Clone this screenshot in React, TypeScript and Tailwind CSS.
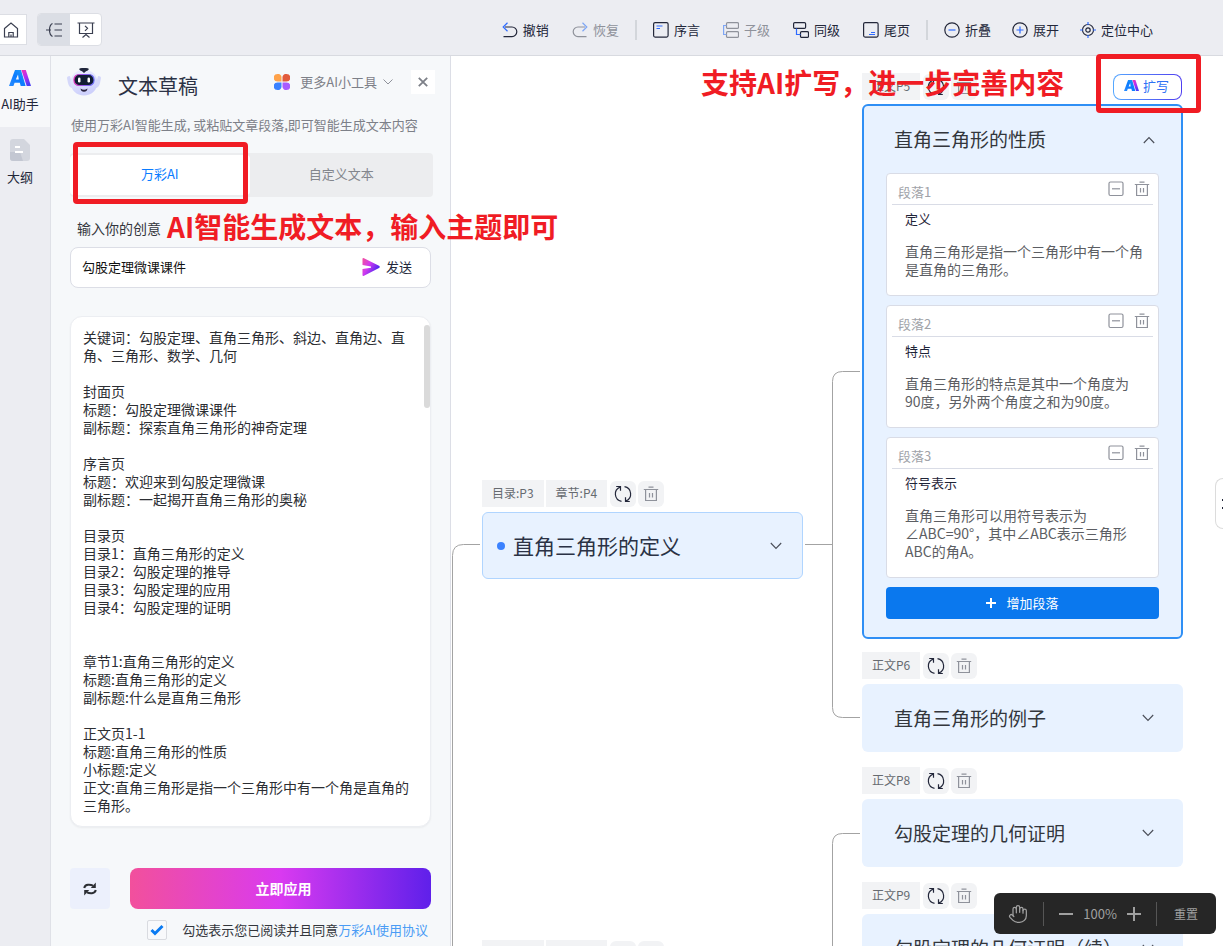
import { useState, type ReactNode } from 'react';
import { Hand } from 'lucide-react';

const DRAFT = `关键词：勾股定理、直角三角形、斜边、直角边、直角、三角形、数学、几何

封面页
标题：勾股定理微课课件
副标题：探索直角三角形的神奇定理

序言页
标题：欢迎来到勾股定理微课
副标题：一起揭开直角三角形的奥秘

目录页
目录1：直角三角形的定义
目录2：勾股定理的推导
目录3：勾股定理的应用
目录4：勾股定理的证明


章节1:直角三角形的定义
标题:直角三角形的定义
副标题:什么是直角三角形

正文页1-1
标题:直角三角形的性质
小标题:定义
正文:直角三角形是指一个三角形中有一个角是直角的三角形。`;

const PARAGRAPHS = [
  { label: '段落1', title: '定义', lines: ['直角三角形是指一个三角形中有一个角', '是直角的三角形。'] },
  { label: '段落2', title: '特点', lines: ['直角三角形的特点是其中一个角度为', '90度，另外两个角度之和为90度。'] },
  {
    label: '段落3',
    title: '符号表示',
    lines: ['直角三角形可以用符号表示为', '∠ABC=90°，其中∠ABC表示三角形', 'ABC的角A。'],
  },
];

const COLLAPSED = [
  { page: '正文P6', title: '直角三角形的例子' },
  { page: '正文P8', title: '勾股定理的几何证明' },
  { page: '正文P9', title: '勾股定理的几何证明（续）' },
];

function Icon({ size = 16, children }: { size?: number; children: ReactNode }) {
  return (
    <svg
      width={size}
      height={size}
      viewBox={`0 0 ${size} ${size}`}
      fill="none"
      stroke="currentColor"
      strokeWidth="1.2"
      className="shrink-0"
      aria-hidden="true"
    >
      {children}
    </svg>
  );
}

function AiLogo({ width, id }: { width: number; id: string }) {
  return (
    <svg width={width} viewBox="0 0 22 16" aria-hidden="true">
      <defs>
        <linearGradient id={`${id}-a`} x1="0" y1="1" x2="1" y2="0">
          <stop offset="0" stopColor="#2a8cff" />
          <stop offset="0.5" stopColor="#0a7bff" />
          <stop offset="1" stopColor="#1fa2f5" />
        </linearGradient>
        <linearGradient id={`${id}-b`} x1="0" y1="0" x2="0.6" y2="1">
          <stop offset="0" stopColor="#f531b5" />
          <stop offset="0.5" stopColor="#b62ff0" />
          <stop offset="1" stopColor="#4a3df5" />
        </linearGradient>
      </defs>
      <path
        fillRule="evenodd"
        d="M6 0h6l4.6 16h-4.9l-.9-3.2H5.6L4.4 16H0zM9 4.5 6.8 9.6h3z"
        fill={`url(#${id}-a)`}
      />
      <path d="M12.4 0h4.4L22 16h-4.3z" fill={`url(#${id}-b)`} />
    </svg>
  );
}

function Robot() {
  return (
    <svg width="36" height="30" viewBox="0 0 36 30" aria-hidden="true">
      <defs>
        <linearGradient id="head" x1="0" y1="0" x2="0.3" y2="1">
          <stop offset="0" stopColor="#eef0ff" />
          <stop offset="1" stopColor="#cdd0fb" />
        </linearGradient>
        <linearGradient id="visor" x1="0" y1="0" x2="1" y2="0">
          <stop offset="0" stopColor="#e235b8" />
          <stop offset="0.5" stopColor="#8c5cf0" />
          <stop offset="1" stopColor="#6b6ef5" />
        </linearGradient>
      </defs>
      <path d="M1 11q0-2 3-2l3 12q-4 0-5-5zM35 11q0-2-3-2l-3 12q4 0 5-5z" fill="#d5d8fa" />
      <ellipse cx="18" cy="15.5" rx="13.5" ry="13" fill="url(#head)" />
      <path d="M13 2q1-1 3-1h4q2 0 3 1-1 1.800-3 2.200L18 6l-2-1.800Q14 3.800 13 2z" fill="#20263c" />
      <rect x="8" y="7.500" width="20" height="11" rx="5" fill="#101c33" stroke="url(#visor)" strokeWidth="1.200" />
      <rect x="12" y="10.500" width="2.500" height="5" rx="1.200" fill="#fff" />
      <rect x="21.500" y="10.500" width="2.500" height="5" rx="1.200" fill="#fff" />
      <path d="M14.500 21.500q3.500 2.500 7 0-.5 3.200-3.500 3.200t-3.500-3.200z" fill="#2b2440" />
    </svg>
  );
}

function ToolItem({ label, muted, children }: { label: string; muted?: boolean; children: ReactNode }) {
  return (
    <button
      type="button"
      disabled={muted}
      className={`flex items-center gap-[5px] whitespace-nowrap ${muted ? 'text-[#8f929b]' : 'text-[#23273a]'}`}
    >
      <Icon>{children}</Icon>
      {label}
    </button>
  );
}

function Divider() {
  return <span className="mx-4 h-5 w-0.5 bg-[#d3d6db]" />;
}

function TopBar() {
  return (
    <header className="flex h-14 shrink-0 items-center border-b border-[#d8dae0] bg-[#ecedf2] pt-1">
      <button
        type="button"
        aria-label="主页"
        className="flex h-[31px] w-[27px] items-center border border-l-0 border-[#dcdee4] bg-white pl-[3px] text-[#3a3f50]"
      >
        <Icon>
          <path d="M1.500 6.500 8 1l6.500 5.500V15h-13zM5.800 15v-4.500h4.400V15M8 12.500V15" />
        </Icon>
      </button>
      <div className="ml-2.5 flex h-[33px] overflow-hidden rounded border border-[#dcdee4] bg-white text-[#3a3f50]">
        <button type="button" aria-label="导图视图" className="flex w-8 items-center justify-center bg-[#dbdee5]">
          <Icon>
            <path d="M0 8h5M6.500 1.500Q3.500 3 3.500 8T6.500 14.500M8.500 2h7.500M8.500 8h7.500M8.500 14h7.500" />
          </Icon>
        </button>
        <button type="button" aria-label="演示视图" className="flex w-[31px] items-center justify-center">
          <Icon size={18}>
            <path d="M.5 2h17M2.500 2v10.500h13V2M8 4.800l2.500 2.500L8 9.800M9 12.500v1.500M5.500 16.500 9 13.500l3.500 3" />
          </Icon>
        </button>
      </div>

      <nav className="mr-[70px] ml-auto flex items-center text-[13px]">
        <div className="flex gap-[23px]">
          <ToolItem label="撤销">
            <path d="M3 5h7a4.800 4.800 0 0 1 0 9.600H1.500" />
            <path d="M5.500.8 1.200 5l4.300 4.200" stroke="#2f6bff" />
          </ToolItem>
          <ToolItem label="恢复" muted>
            <path d="M13 5H6a4.800 4.800 0 0 0 0 9.600h8.500" />
            <path d="M10.500.8 14.800 5l-4.300 4.200" stroke="#7ea6f5" />
          </ToolItem>
        </div>
        <Divider />
        <div className="flex gap-[23px]">
          <ToolItem label="序言">
            <rect x=".6" y=".6" width="14.500" height="14.500" rx="1.500" />
            <path d="M3.500 4h6M3.500 6.500h3.500" stroke="#2f6bff" />
          </ToolItem>
          <ToolItem label="子级" muted>
            <rect x="3.500" y=".6" width="12" height="5.800" rx="1.200" />
            <rect x="3.500" y="9.600" width="12" height="5.800" rx="1.200" />
            <path d="M3.500 3.500H.6v9h2.900" stroke="#7ea6f5" />
          </ToolItem>
          <ToolItem label="同级">
            <rect x=".6" y=".6" width="12" height="5.800" rx="1.200" />
            <rect x="7.500" y="9.600" width="8" height="5.800" rx="1.200" />
            <path d="M3.500 6.500v6h4" stroke="#2f6bff" />
          </ToolItem>
          <ToolItem label="尾页">
            <rect x=".6" y=".6" width="14.500" height="14.500" rx="1.500" />
            <path d="M8 10.500h4M6 12.500h6" stroke="#2f6bff" />
          </ToolItem>
        </div>
        <Divider />
        <div className="flex gap-[21px]">
          <ToolItem label="折叠">
            <circle cx="8" cy="8" r="7.200" />
            <path d="M4.500 8h7" stroke="#2f6bff" />
          </ToolItem>
          <ToolItem label="展开">
            <circle cx="8" cy="8" r="7.200" />
            <path d="M4.500 8h7M8 4.500v7" stroke="#2f6bff" />
          </ToolItem>
          <ToolItem label="定位中心">
            <circle cx="8" cy="8" r="5.500" />
            <circle cx="8" cy="8" r="2.200" />
            <path d="M8 0v3M8 13v3M0 8h3M13 8h3" stroke="#2f6bff" />
          </ToolItem>
        </div>
      </nav>
    </header>
  );
}

function SideRail() {
  return (
    <aside className="flex w-[51px] shrink-0 flex-col border-r border-[#dfe1e7] bg-[#ecedf2] text-[13px] text-[#23273a]">
      <button type="button" className="flex h-[71px] flex-col items-center bg-[#f7f8fa] pt-3.5 pr-2.5 whitespace-nowrap">
        <AiLogo width={22} id="rail" />
        <span className="mt-2 leading-5">AI助手</span>
      </button>
      <button type="button" className="flex flex-col items-center pt-3 pr-2.5">
        <svg width="20" height="22" viewBox="0 0 20 22" aria-hidden="true">
          <path d="M3 0h11l6 6v13q0 3-3 3H3q-3 0-3-3V3q0-3 3-3z" fill="#d3d6de" />
          <path d="M0 13h10l3 9H3q-3 0-3-3z" fill="#c3c7d2" />
          <path d="M5 8h5M5 13h8" stroke="#fff" strokeWidth="2" />
        </svg>
        <span className="mt-1.5 leading-5">大纲</span>
      </button>
    </aside>
  );
}

function DraftPanel() {
  const [tab, setTab] = useState('ai');
  const [agreed, setAgreed] = useState(true);

  return (
    <section className="relative z-10 flex w-[400px] shrink-0 flex-col border-r border-[#dcdee6] bg-[#f6f8fa] px-[19px] pb-[5px]">
      <div className="flex h-14 items-center pb-1">
        <div className="-ml-1">
          <Robot />
        </div>
        <h1 className="ml-4 pt-2 text-[20px] text-[#2b3245]">文本草稿</h1>
        <button type="button" className="ml-auto flex items-center text-[13px] text-[#7d8088]">
          <svg width="16" height="16" viewBox="0 0 16 16" className="mr-2.5" aria-hidden="true">
            <path d="M3.500 0A3.500 3.500 0 0 1 7.500 4v3.500H3.500a3.500 3.500 0 0 1 0-7.500z" fill="#ffa24a" />
            <path d="M12.500 0A3.500 3.500 0 0 0 8.500 4v3.500h4a3.500 3.500 0 0 0 0-7.500z" fill="#e25b3c" />
            <path d="M3.500 16A3.500 3.500 0 0 0 7.500 12V8.500H3.500a3.500 3.500 0 0 0 0 7.500z" fill="#3b82ff" />
            <path d="M12.500 16A3.500 3.500 0 0 1 8.500 12V8.500h4a3.500 3.500 0 0 1 0 7.500z" fill="#a85bff" />
          </svg>
          更多AI小工具
          <svg width="10" height="6" viewBox="0 0 10 6" className="ml-1.5" fill="none" stroke="#8f929b">
            <path d="M.5.5 5 5 9.500.5" />
          </svg>
        </button>
        <button
          type="button"
          aria-label="关闭"
          className="mr-[-4px] ml-[18px] flex size-6 items-center justify-center bg-white text-[#7d8088]"
        >
          <svg width="10" height="10" viewBox="0 0 10 10" stroke="currentColor" strokeWidth="1.800">
            <path d="m.8.8 8.400 8.400M9.200.8.8 9.200" />
          </svg>
        </button>
      </div>
      <p className="pl-px text-[13px] leading-[26px] whitespace-nowrap text-[#7d8088]">
        使用万彩AI智能生成, 或粘贴文章段落,即可智能生成文本内容
      </p>

      <div className="relative mt-[15px] mr-[-2px] flex h-11 shrink-0 rounded bg-[#ecedef] text-[13px]">
        <button
          type="button"
          onClick={() => setTab('ai')}
          className={`my-0.5 mr-0.5 flex-1 rounded-sm pb-0.5 ${tab === 'ai' ? 'bg-white text-[#0a7bff]' : 'text-[#83868d]'}`}
        >
          万彩AI
        </button>
        <button
          type="button"
          onClick={() => setTab('custom')}
          className={`my-0.5 mr-0.5 flex-1 rounded-sm pb-0.5 ${tab === 'custom' ? 'bg-white text-[#0a7bff]' : 'text-[#83868d]'}`}
        >
          自定义文本
        </button>
        <span className="pointer-events-none absolute -top-[11px] left-[3px] h-[62px] w-[175px] rounded-sm border-5 border-[#f01c24]" />
      </div>

      <div className="relative mt-[19px] pl-[7px] text-[14px] leading-6 text-[#33363c]">
        <label htmlFor="idea">输入你的创意</label>
        <strong className="absolute -top-2 left-[97px] text-[28px] leading-9 whitespace-nowrap text-[#f01c24]">
          AI智能生成文本，输入主题即可
        </strong>
      </div>
      <div className="mt-[7px] flex h-[41px] shrink-0 items-center rounded-lg border border-[#dcdee6] bg-white px-[11px] pb-0.5">
        <input
          id="idea"
          defaultValue="勾股定理微课课件"
          className="min-w-0 flex-1 text-[13px] text-[#111] outline-none"
        />
        <button type="button" className="mr-[7px] flex items-center gap-1.5 text-[13px] text-[#23273a]">
          <svg width="18" height="18" viewBox="0 0 18 18" aria-hidden="true">
            <defs>
              <linearGradient id="send" x1="0" y1="0" x2="1" y2="0.6">
                <stop offset="0" stopColor="#f5509a" />
                <stop offset="0.45" stopColor="#cf3af0" />
                <stop offset="1" stopColor="#3f22f0" />
              </linearGradient>
            </defs>
            <path d="M.5 1Q.5-.5 2 .3l15 7.500q1.500 1.200 0 2.200L2 17.700Q.5 18.300.5 17v-6L9 9.800V8.400L.5 7z" fill="url(#send)" />
          </svg>
          发送
        </button>
      </div>

      <div className="relative mt-7 flex min-h-0 flex-1 rounded-xl border border-[#eceef2] bg-white shadow-xs">
        <textarea
          aria-label="文本内容"
          defaultValue={DRAFT}
          className="w-full resize-none overflow-hidden rounded-xl py-[11px] pr-[17px] pl-3 text-[14px] leading-[18px] text-[#2c2e33] outline-none"
        />
        <span className="absolute top-2 right-0 h-[83px] w-1.5 rounded-full bg-[#dadada]" />
      </div>

      <div className="mt-[41px] flex h-[41px] shrink-0 gap-5">
        <button type="button" aria-label="重新生成" className="flex w-10 items-center justify-center rounded bg-[#ecf0fc]">
          <svg width="14" height="14" viewBox="0 0 14 14" fill="none" stroke="#2c2e33" strokeWidth="2">
            <path d="M1.200 6Q2 3 5 2.800q3-.2 5 .8M12.800 8Q12 11 9 11.200q-3 .2-5-.8" />
            <path d="M12.800.5v5.500H7.800zM1.200 13.500V8h5z" fill="#2c2e33" stroke="none" />
          </svg>
        </button>
        <button
          type="button"
          className="flex-1 rounded-lg bg-[linear-gradient(90deg,#f2509c,#d93af0_50%,#5f20ea)] pl-1.5 text-[14px] font-bold text-white"
        >
          立即应用
        </button>
      </div>
      <div className="mt-2.5 flex h-[22px] items-center justify-end pr-[3px] text-[13px] whitespace-nowrap text-[#33363c]">
        <span className="relative mr-[15px] flex size-5">
          <input
            id="agree"
            type="checkbox"
            checked={agreed}
            onChange={(e) => setAgreed(e.target.checked)}
            className="size-5 appearance-none rounded-xs border border-[#d9dbe0] bg-[#f8f9fb]"
          />
          {agreed && (
            <svg
              width="14"
              height="12"
              viewBox="0 0 14 12"
              fill="none"
              stroke="#0a7bf2"
              strokeWidth="3"
              className="pointer-events-none absolute top-1 left-[3px]"
            >
              <path d="m1.500 6 3.500 3.500L12.500 2" />
            </svg>
          )}
        </span>
        <label htmlFor="agree">勾选表示您已阅读并且同意</label>
        <a href="#agreement" className="text-[#4a9cf5]">
          万彩AI使用协议
        </a>
      </div>
    </section>
  );
}

function TrashIcon() {
  return (
    <Icon>
      <path d="M5.500 1.200h5M.8 3.500h14.400M2.600 3.500v11h10.800v-11M6.500 7v4.500M9.500 7v4.500" />
    </Icon>
  );
}

function NodeTools({ pages, children }: { pages: string[]; children?: ReactNode }) {
  return (
    <div className="flex h-[27px] items-center gap-0.5 text-[12px] text-[#666a70]">
      {pages.map((page) => (
        <span key={page} className="flex h-full items-center bg-[#f2f3f5] px-2.5 pb-0.5">
          {page}
        </span>
      ))}
      <button
        type="button"
        aria-label="重新生成"
        className="ml-px flex size-[26px] items-center justify-center rounded-md bg-[#f2f3f5] text-[#23273a]"
      >
        <Icon size={18}>
          <path d="M7.500 16.400A7.500 7.500 0 0 1 6 2.100M10.500 1.600A7.500 7.500 0 0 1 12 15.900M2.200 1.500h4.300v4.300M15.800 16.500h-4.300v-4.300" />
        </Icon>
      </button>
      <button
        type="button"
        aria-label="删除"
        className="flex size-[26px] items-center justify-center rounded-md bg-[#f2f3f5] text-[#8f929b]"
      >
        <TrashIcon />
      </button>
      {children}
    </div>
  );
}

function Chevron({ up }: { up?: boolean }) {
  return (
    <svg
      width="12"
      height="8"
      viewBox="0 0 12 8"
      fill="none"
      stroke="#4a4e58"
      strokeWidth="1.100"
      className={up ? 'rotate-180' : ''}
    >
      <path d="M.8 1 6 6.500 11.200 1" />
    </svg>
  );
}

function Paragraph({ label, title, lines }: { label: string; title: string; lines: string[] }) {
  return (
    <article className="rounded border border-[#d9dce6] bg-white px-[5px] pb-[17px]">
      <div className="flex h-[31px] items-center gap-2.5 border-b border-[#d9dce6] pr-[3px] pl-1.5 text-[#8f929b]">
        <span className="mr-auto pt-1.5 text-[13px] text-[#a0a2a8]">{label}</span>
        <button type="button" aria-label="收起段落">
          <Icon>
            <rect x="1" y="1" width="14" height="13.500" rx="1.500" />
            <path d="M4 7.800h8" />
          </Icon>
        </button>
        <button type="button" aria-label="删除段落">
          <TrashIcon />
        </button>
      </div>
      <h3 className="mt-[5px] pl-[13px] text-[13px] leading-[18px] text-[#1f2438]">{title}</h3>
      <p className="mt-3.5 pl-[13px] text-[14px] leading-[18px] whitespace-nowrap text-[#5c5e63]">
        {lines.map((line) => (
          <span key={line} className="block">
            {line}
          </span>
        ))}
      </p>
    </article>
  );
}

function ChapterNode() {
  return (
    <div className="absolute top-[424px] left-[31px] w-[321px]">
      <NodeTools pages={['目录:P3', '章节:P4']} />
      <div className="mt-[5px] flex h-[67px] items-center rounded-md border border-[#b0d5ff] bg-[#e8f2ff] pr-5 pl-3.5">
        <span className="size-2 rounded-full bg-[#3b82ff]" />
        <h2 className="mr-auto ml-2 text-[21px] text-[#2b3245]">直角三角形的定义</h2>
        <Chevron />
      </div>
    </div>
  );
}

function MindMap() {
  return (
    <div className="absolute inset-0 overflow-hidden">
      <svg className="absolute inset-0 size-full" fill="none" stroke="#a3a3a3">
        <path d="M29 488.500H12.500Q1.500 488.500 1.500 499.500V1200" />
        <path d="M354 488.500h27" />
        <path d="M409 315.500h-17.500q-10 0-10 10V651.500q0 10 10 10H409" />
        <path d="M409 777.500h-17.500q-10 0-10 10V1200" />
      </svg>

      <ChapterNode />
      <div className="absolute top-[884px] left-[31px] w-[321px]">
        <NodeTools pages={['目录:P3', '章节:P7']} />
      </div>

      <div className="absolute top-[17px] left-[411px] flex w-[321px] flex-col gap-[15px]">
        <div className="-mb-0.5">
          <NodeTools pages={['正文P5']}>
            <button
              type="button"
              className="mr-px ml-auto flex h-[26px] rounded-lg bg-[linear-gradient(90deg,#55a8ff,#4f3df0)] p-px text-[13px] text-[#2f73f5]"
            >
              <span className="flex h-full items-center gap-1 rounded-[7px] bg-white px-2.5 pr-3 pb-0.5">
                <AiLogo width={15} id="expand" />
                扩写
              </span>
            </button>
          </NodeTools>
          <div className="mt-1 rounded-md border-2 border-[#2f8ff5] bg-[#e8f2ff] px-[22px] pb-[18px]">
            <div className="flex h-[67px] items-center justify-between pr-1 pl-2">
              <h2 className="text-[19px] text-[#33363c]">直角三角形的性质</h2>
              <Chevron up />
            </div>
            <div className="flex flex-col gap-[9px]">
              {PARAGRAPHS.map((p) => (
                <Paragraph key={p.label} {...p} />
              ))}
              <button
                type="button"
                className="flex h-8 items-center justify-center gap-2.5 rounded bg-[#0a78ee] text-[13px] text-white"
              >
                <svg width="10" height="10" viewBox="0 0 10 10" stroke="currentColor" strokeWidth="2">
                  <path d="M5 0v10M0 5h10" />
                </svg>
                增加段落
              </button>
            </div>
          </div>
        </div>
        {COLLAPSED.map((node) => (
          <div key={node.page}>
            <NodeTools pages={[node.page]} />
            <div className="mt-[5px] flex h-[68px] items-center justify-between rounded-md bg-[#e8f2ff] pr-[29px] pl-8">
              <h2 className="text-[19px] text-[#33363c]">{node.title}</h2>
              <Chevron />
            </div>
          </div>
        ))}
      </div>
    </div>
  );
}

function ZoomBar() {
  return (
    <div className="absolute right-[7px] bottom-3 flex h-[41px] items-center rounded-md bg-[#262626] pr-4 pl-3.5 text-[12px] text-[#a0a0a0]">
      <button type="button" aria-label="拖动画布">
        <Hand size={20} strokeWidth={1.5} />
      </button>
      <span className="mx-[15px] h-6 w-px bg-[#555]" />
      <button type="button" aria-label="缩小" className="mr-2.5 h-0.5 w-3.5 bg-[#a0a0a0]" />
      <span className="text-[13px]">100%</span>
      <button type="button" aria-label="放大" className="ml-2.5">
        <svg width="14" height="14" viewBox="0 0 14 14" stroke="currentColor" strokeWidth="2">
          <path d="M7 0v14M0 7h14" />
        </svg>
      </button>
      <span className="mx-[15px] h-6 w-px bg-[#555]" />
      <button type="button" className="px-0.5">
        重置
      </button>
    </div>
  );
}

export default function App() {
  return (
    <div
      lang="zh-CN"
      className="flex h-screen flex-col overflow-hidden bg-white font-['Noto_Sans_CJK_SC',sans-serif]"
    >
      <TopBar />
      <div className="flex min-h-0 flex-1">
        <SideRail />
        <DraftPanel />
        <main className="relative min-w-0 flex-1">
          <MindMap />
          <strong className="absolute top-2 left-[250px] text-[28px] leading-9 whitespace-nowrap text-[#f01c24]">
            支持AI扩写，进一步完善内容
          </strong>
          <span className="pointer-events-none absolute -top-0.5 left-[645px] h-[59px] w-[105px] rounded-sm border-5 border-[#f01c24]" />
          <button
            type="button"
            aria-label="展开侧栏"
            className="absolute top-[422px] right-0 flex h-[51px] w-2 items-center justify-end rounded-l-lg border border-r-0 border-[#dcdcdc] bg-white"
          >
            <span className="h-2.5 w-px border-y-2 border-[#23273a]" />
          </button>
          <ZoomBar />
        </main>
      </div>
    </div>
  );
}
